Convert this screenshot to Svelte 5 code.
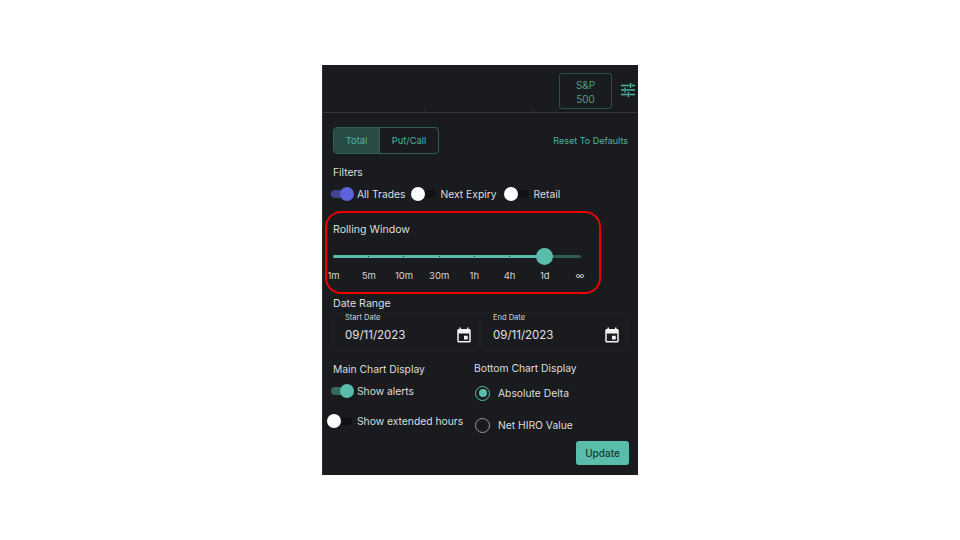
<script>
  const marks = ['1m', '5m', '10m', '30m', '1h', '4h', '1d', '∞'];
  const stops = [1, 2, 3, 4, 5];
</script>

<div class="page">
  <div class="panel">
    <header class="top">
      <div class="index">S&amp;P<br />500</div>
      <svg class="tune" viewBox="0 0 14 14" width="14" height="14" fill="none" stroke="#4fb3a1" stroke-width="1.400">
        <path d="M0 2.500h8.500M10.500 2.500H14M9.500 0v5M0 7h3M5 7h9M4 4.500v5M0 11.500h6.500M8.500 11.500H14M7.500 9v5" />
      </svg>
    </header>
    <div class="ticks"><i></i><i></i></div>

    <section class="body">
      <div class="head">
        <div class="seg"><span class="on">Total</span><span>Put/Call</span></div>
        <span class="reset">Reset To Defaults</span>
      </div>

      <h4 class="filters">Filters</h4>
      <div class="row">
        <span class="sw on purple"><b></b></span><span class="lab">All Trades</span>
        <span class="sw b"><b></b></span><span class="lab c">Next Expiry</span>
        <span class="sw d"><b></b></span><span class="lab e">Retail</span>
      </div>

      <div class="rolling">
        <h4 class="rw">Rolling Window</h4>
        <div class="slider">
          <div class="rail"></div>
          <div class="fill"></div>
          {#each stops as s}<em style="left: {s * 35.2}px"></em>{/each}
          <div class="thumb"></div>
        </div>
        <div class="marks">
          {#each marks as m}<span>{m}</span>{/each}
        </div>
        <div class="ring"></div>
      </div>

      <h4 class="range">Date Range</h4>
      <div class="dates">
        {#each ['Start Date', 'End Date'] as d}
          <div class="date">
            <label for={d}>{d}</label>
            <div class="val">
              <span id={d}>09/11/2023</span>
              <svg viewBox="0 0 24 24" width="18" height="18" fill="#f2f2f2"><path d="M19 4h-1V2h-2v2H8V2H6v2H5c-1.100 0-2 .9-2 2v14c0 1.100.9 2 2 2h14c1.100 0 2-.9 2-2V6c0-1.100-.9-2-2-2zm0 16H5V10h14v10zm-2-7h-5v5h5v-5z"/></svg>
            </div>
          </div>
        {/each}
      </div>

      <div class="cols">
        <div class="left">
          <h4>Main Chart Display</h4>
          <div class="opt"><span class="sw on teal"><b></b></span><span class="lab">Show alerts</span></div>
          <div class="opt ext"><span class="sw"><b></b></span><span class="lab">Show extended hours</span></div>
        </div>
        <div class="right">
          <h4>Bottom Chart Display</h4>
          <div class="radio first"><span class="dot on"></span>Absolute Delta</div>
          <div class="radio"><span class="dot"></span>Net HIRO Value</div>
        </div>
      </div>
      <div class="foot"><button>Update</button></div>
    </section>
  </div>
</div>

<style>
  :global(body) { margin: 0; background: #fff; }
  .page { width: 960px; height: 540px; display: flex; align-items: center; justify-content: center; font-family: Inter, "Liberation Sans", sans-serif; }
  .panel { width: 316px; height: 410px; background: #191b1f; border-left: 1px solid #2b2d31; box-sizing: border-box; color: #d9d9d9; display: flex; flex-direction: column; }
  .top { height: 48px; box-sizing: border-box; border-bottom: 1px solid #33353a; display: flex; justify-content: flex-end; align-items: flex-start; padding: 9px 3px 0 0; gap: 9px; flex: none; }
  .index { width: 53px; height: 36px; box-sizing: border-box; border: 1px solid #27524a; border-radius: 3px; color: #4a9f90; font-size: 10px; line-height: 14px; text-align: center; padding-top: 4px; margin-top: -1px; }
  .tune { margin-top: 9px; }
  .ticks { height: 0; position: relative; }
  .ticks i { position: absolute; top: -3px; width: 1px; height: 3px; background: #33353a; left: 102px; }
  .ticks i + i { left: 210px; }
  .body { padding: 14px 10px 0 10px; position: relative; flex: 1; min-height: 0; }
  h4 { margin: 0; font-weight: 400; font-size: 10.300px; line-height: 14px; color: #dedede; }
  .head { display: flex; justify-content: space-between; align-items: center; height: 27px; }
  .seg { display: flex; border: 1px solid #2f5f56; border-radius: 4px; height: 27px; box-sizing: border-box; font-size: 9.300px; color: #4fb3a1; overflow: hidden; width: 106px; }
  .seg span { display: flex; align-items: center; justify-content: center; flex: 1; }
  .seg .on { background: #294a45; border-right: 1px solid #2f5f56; flex: none; width: 45px; }
  .reset { font-size: 9px; color: #4fb3a1; }
  .filters { margin-top: 11px; }
  .row { display: flex; align-items: center; height: 16px; margin-top: 7px; margin-left: -2px; }
  .sw { display: block; position: relative; width: 21px; height: 8px; border-radius: 4px; background: #101114; flex: none; }
  .sw b { position: absolute; width: 14px; height: 14px; border-radius: 50%; background: #fff; left: -4px; top: -3px; }
  .sw.on b { left: auto; right: -2px; }
  .sw.purple { background: #43458f; }
  .sw.purple b { background: #5d63dd; }
  .sw.teal { background: #33695f; }
  .sw.teal b { background: #5abcaa; }
  .lab { font-size: 10.300px; color: #dedede; }
  .row .lab { margin-left: 5px; }
  .sw.b { margin-left: 10px; }
  .row .lab.c { margin-left: 4px; }
  .sw.d { margin-left: 11px; }
  .row .lab.e { margin-left: 5px; }
  .rolling { position: relative; padding-top: 21px; }
  .rw { font-size: 10.600px; }
  .slider { position: relative; height: 14px; margin-top: 12px; width: 248px; }
  .rail { position: absolute; left: 0; right: 0; top: 6px; height: 3px; background: #2f5c54; border-radius: 2px; }
  .fill { position: absolute; left: 0; width: 211px; top: 6px; height: 3px; background: #5abcaa; border-radius: 2px; }
  .slider em { position: absolute; top: 7px; width: 1px; height: 1px; background: #1d3a35; }
  .thumb { position: absolute; left: 203px; top: -1px; width: 17px; height: 17px; border-radius: 50%; background: #5abcaa; }
  .marks { display: flex; width: 282px; margin-left: -17px; margin-top: 6px; font-size: 9.500px; line-height: 14px; color: #d6d6d6; }
  .marks span { width: 35.200px; text-align: center; flex: none; }
  .ring { position: absolute; left: -8px; top: 9px; width: 276px; height: 83px; border: 2px solid #ee0000; border-radius: 16px; box-sizing: border-box; pointer-events: none; }
  .range { margin-top: 14px; font-size: 10.600px; }
  .dates { display: flex; gap: 2px; margin-top: 1px; }
  .date { width: 146px; height: 38px; box-sizing: border-box; border: 1px solid #1f2126; border-radius: 4px; padding: 0 5px 0 11px; position: relative; }
  .date label { display: block; font-size: 7.500px; line-height: 10px; color: #d6d6d6; }
  .val { display: flex; justify-content: space-between; align-items: center; font-size: 11.500px; color: #e0e0e0; margin-top: 3px; }
  .cols { display: flex; margin-top: 12px; }
  .left { width: 141px; }
  .right h4 { margin-top: -1px; }
  .opt { display: flex; align-items: center; height: 16px; margin-left: -2px; margin-top: 7px; }
  .opt .lab { margin-left: 5px; }
  .opt.ext { margin-top: 14px; }
  .radio { display: flex; align-items: center; font-size: 10.300px; color: #dedede; height: 16px; margin-top: 16px; }
  .radio.first { margin-top: 10px; }
  .dot { width: 15px; height: 15px; box-sizing: border-box; border: 1.500px solid #9a9a9a; border-radius: 50%; margin-right: 8px; margin-left: 1px; position: relative; flex: none; }
  .dot.on { border-color: #5abcaa; }
  .dot.on::after { content: ""; position: absolute; inset: 2.500px; background: #5abcaa; border-radius: 50%; }
  .foot { display: flex; justify-content: flex-end; margin-top: 8px; margin-right: -1px; }
  button { width: 53px; height: 24px; border: none; border-radius: 3px; background: #5abcaa; color: #1f3a36; font: 500 10px Inter, sans-serif; padding: 0; }
</style>
